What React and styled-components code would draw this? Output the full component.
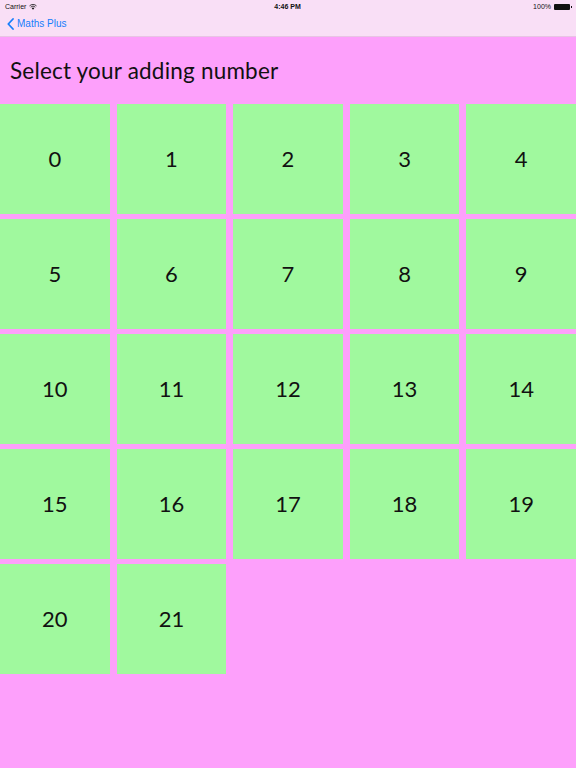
import React from 'react'
import styled, { createGlobalStyle } from 'styled-components'

const Global = createGlobalStyle`
  body {
    margin: 0;
    background: #fda0fb;
    font-family: "Lato", "Noto Sans", sans-serif;
  }
`

const Screen = styled.div`
  width: 576px;
  height: 768px;
  background: #fda0fb;
  display: flex;
  flex-direction: column;
  overflow: hidden;
`

const TopBars = styled.div`
  background: #f9dff6;
  height: 37px;
  display: flex;
  flex-direction: column;
  border-bottom: 0.5px solid #e8c4e4;
  box-sizing: border-box;
`

const StatusBar = styled.div`
  height: 13px;
  padding: 0 6px 0 5px;
  display: flex;
  align-items: center;
  justify-content: space-between;
  font-family: "Liberation Sans", Arial, sans-serif;
  font-size: 7px;
  color: #111;
`

const StatusSide = styled.div`
  width: 80px;
  display: flex;
  align-items: center;
  gap: 3px;
  justify-content: ${p => (p.$right ? 'flex-end' : 'flex-start')};
`

const Clock = styled.div`
  font-weight: bold;
`

const Battery = styled.div`
  width: 16px;
  height: 6px;
  border-radius: 1px;
  background: #111;
  position: relative;
  &:after {
    content: '';
    position: absolute;
    right: -2px;
    top: 2px;
    width: 1px;
    height: 2px;
    background: #111;
  }
`

const NavBar = styled.div`
  flex: 1;
  display: flex;
  align-items: center;
  padding-left: 7px;
  gap: 3px;
  color: #157efb;
  font-family: "Liberation Sans", Arial, sans-serif;
  font-size: 10px;
  padding-bottom: 2px;
`

const Title = styled.h1`
  margin: 0;
  height: 67px;
  display: flex;
  align-items: center;
  padding-left: 10px;
  font-size: 22.5px;
  font-weight: normal;
  letter-spacing: 0.2px;
  color: #111;
  padding-bottom: 1px;
  box-sizing: border-box;
`

const Grid = styled.div`
  display: grid;
  grid-template-columns: repeat(5, 1fr);
  grid-auto-rows: 109.5px;
  gap: 5.5px 7px;
`

const Cell = styled.div`
  background: #a0f99e;
  display: flex;
  align-items: center;
  justify-content: center;
  font-size: 22px;
  color: #111;
`

const Wifi = () => (
  <svg width="8" height="6" viewBox="0 0 16 12">
    <path d="M8 11.5 L5.5 8.5 A3.5 3.5 0 0 1 10.5 8.5 Z" fill="#111" />
    <path d="M3.3 6.3 A6.8 6.8 0 0 1 12.7 6.3" stroke="#111" strokeWidth="1.6" fill="none" />
    <path d="M1 3.8 A10 10 0 0 1 15 3.8" stroke="#111" strokeWidth="1.6" fill="none" />
  </svg>
)

const Chevron = () => (
  <svg width="7" height="12" viewBox="0 0 7 12">
    <path d="M6 1 L1.3 6 L6 11" stroke="#157efb" strokeWidth="1.8" fill="none" strokeLinecap="round" strokeLinejoin="round" />
  </svg>
)

const numbers = Array.from({ length: 22 }, (_, i) => i)

const App = () => {
  return (
    <Screen>
      <Global />
      <TopBars>
        <StatusBar>
          <StatusSide>Carrier <Wifi /></StatusSide>
          <Clock>4:46 PM</Clock>
          <StatusSide $right>100% <Battery /></StatusSide>
        </StatusBar>
        <NavBar>
          <Chevron />
          Maths Plus
        </NavBar>
      </TopBars>
      <Title>Select your adding number</Title>
      <Grid>
        {numbers.map(n => (
          <Cell key={n}>{n}</Cell>
        ))}
      </Grid>
    </Screen>
  )
}

export default App
